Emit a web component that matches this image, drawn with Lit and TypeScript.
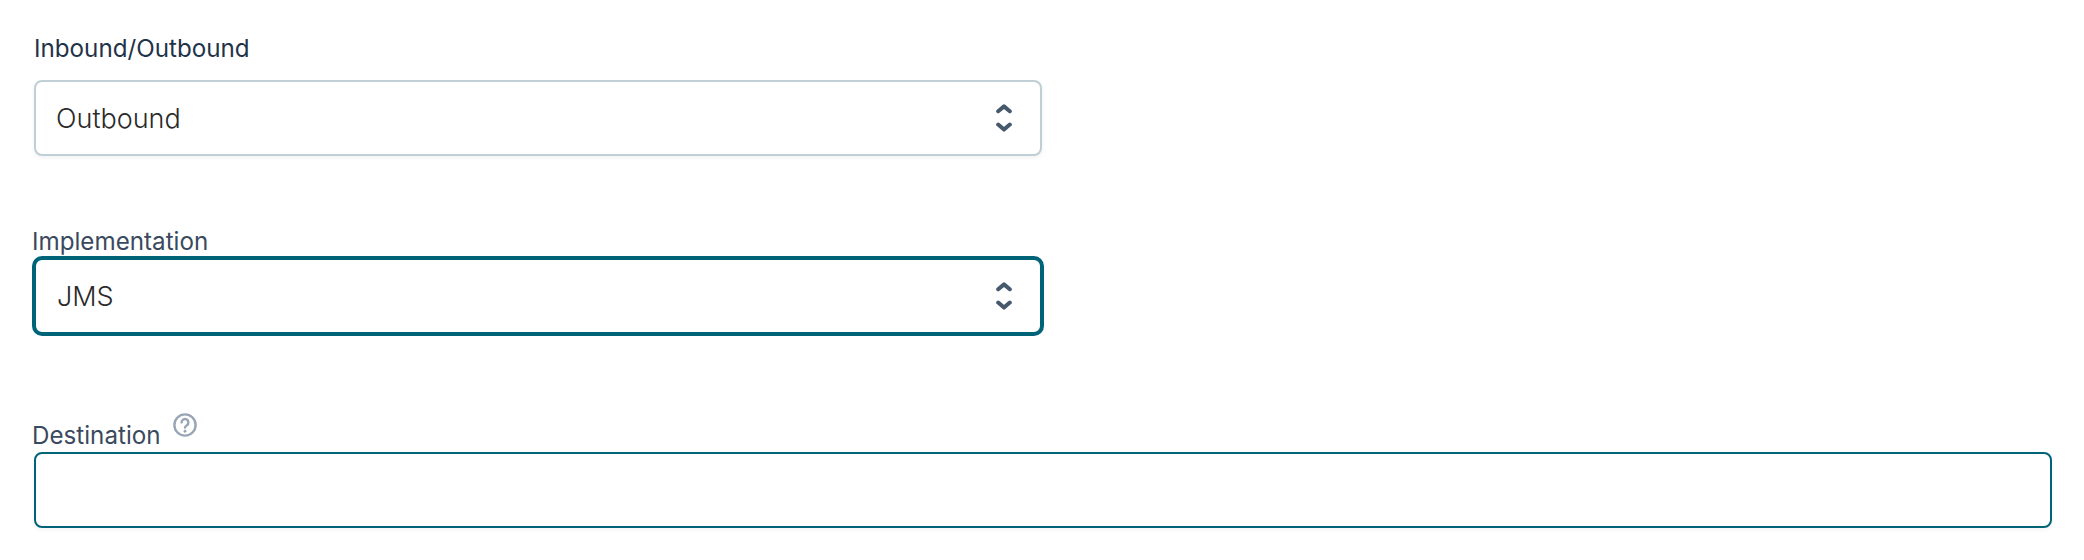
import { LitElement, html, css } from "lit";
import { customElement } from "lit/decorators.js";

const chevrons = html`<svg class="chev" viewBox="0 0 16 28" width="16" height="28" fill="none" stroke="currentColor" stroke-width="4" stroke-linecap="round" stroke-linejoin="round">
  <path d="M2.2 7.2 8 2.400l5.800 4.800" /><path d="M2.200 20.600 8 25.600l5.800-5" />
</svg>`;

@customElement("app-root")
export class AppRoot extends LitElement {
  static styles = css`
    :host { display: block; background: #fff; height: 560px; box-sizing: border-box; font-family: Inter, "Liberation Sans", sans-serif; overflow: hidden; }
    .form { display: flex; flex-direction: column; padding: 36px 32px 0; }
    .field { display: flex; flex-direction: column; }
    .label { font-size: 24.2px; line-height: 24px; color: #3a4a5e; display: flex; align-items: flex-start; margin-bottom: 2px; }
    .label.first { color: #1f3349; margin-bottom: 19px; padding: 1px 0 0 2px; }
    .label.last { margin-bottom: 4px; padding-top: 2px; }
    .box { box-sizing: border-box; background: #fff; display: flex; align-items: center; justify-content: space-between; font-size: 27px; font-weight: 300; color: #2a2a2a; border-radius: 8px; }
    .s1 { width: 1008px; height: 76px; margin-left: 2px; border: 2px solid #c0ced6; padding: 0 28px 0 20px; box-shadow: 0 2px 4px rgba(20,40,60,.06); }
    .s2 { width: 1012px; height: 80px; border: 4px solid #006478; padding: 0 28px 0 21px; border-radius: 10px; }
    .chev { color: #46586c; }
    .i1 { width: 2018px; height: 76px; margin-left: 2px; border: 2px solid #006478; box-shadow: 0 2px 4px rgba(20,40,60,.05); }
    .help { width: 24px; height: 24px; margin: -11px 0 0 12px; color: #9aa5b4; }
    .f2 { margin-top: 74px; }
    .f3 { margin-top: 86px; }
  `;

  render() {
    return html`<div class="form">
      <div class="field">
        <div class="label first">Inbound/Outbound</div>
        <div class="box s1"><span>Outbound</span>${chevrons}</div>
      </div>
      <div class="field f2">
        <div class="label">Implementation</div>
        <div class="box s2"><span>JMS</span>${chevrons}</div>
      </div>
      <div class="field f3">
        <div class="label last">Destination
          <svg class="help" viewBox="0 0 24 24" fill="none" stroke="currentColor" stroke-width="2.4" stroke-linecap="round">
            <circle cx="12" cy="12" r="10.6" />
            <path d="M8.6 9.4a3.4 3.400 0 1 1 5.300 2.800c-1.100.7-1.900 1.300-1.900 2.400" />
            <path d="M12 18.200v.1" stroke-width="2.800" />
          </svg>
        </div>
        <div class="box i1"></div>
      </div>
    </div>`;
  }
}
